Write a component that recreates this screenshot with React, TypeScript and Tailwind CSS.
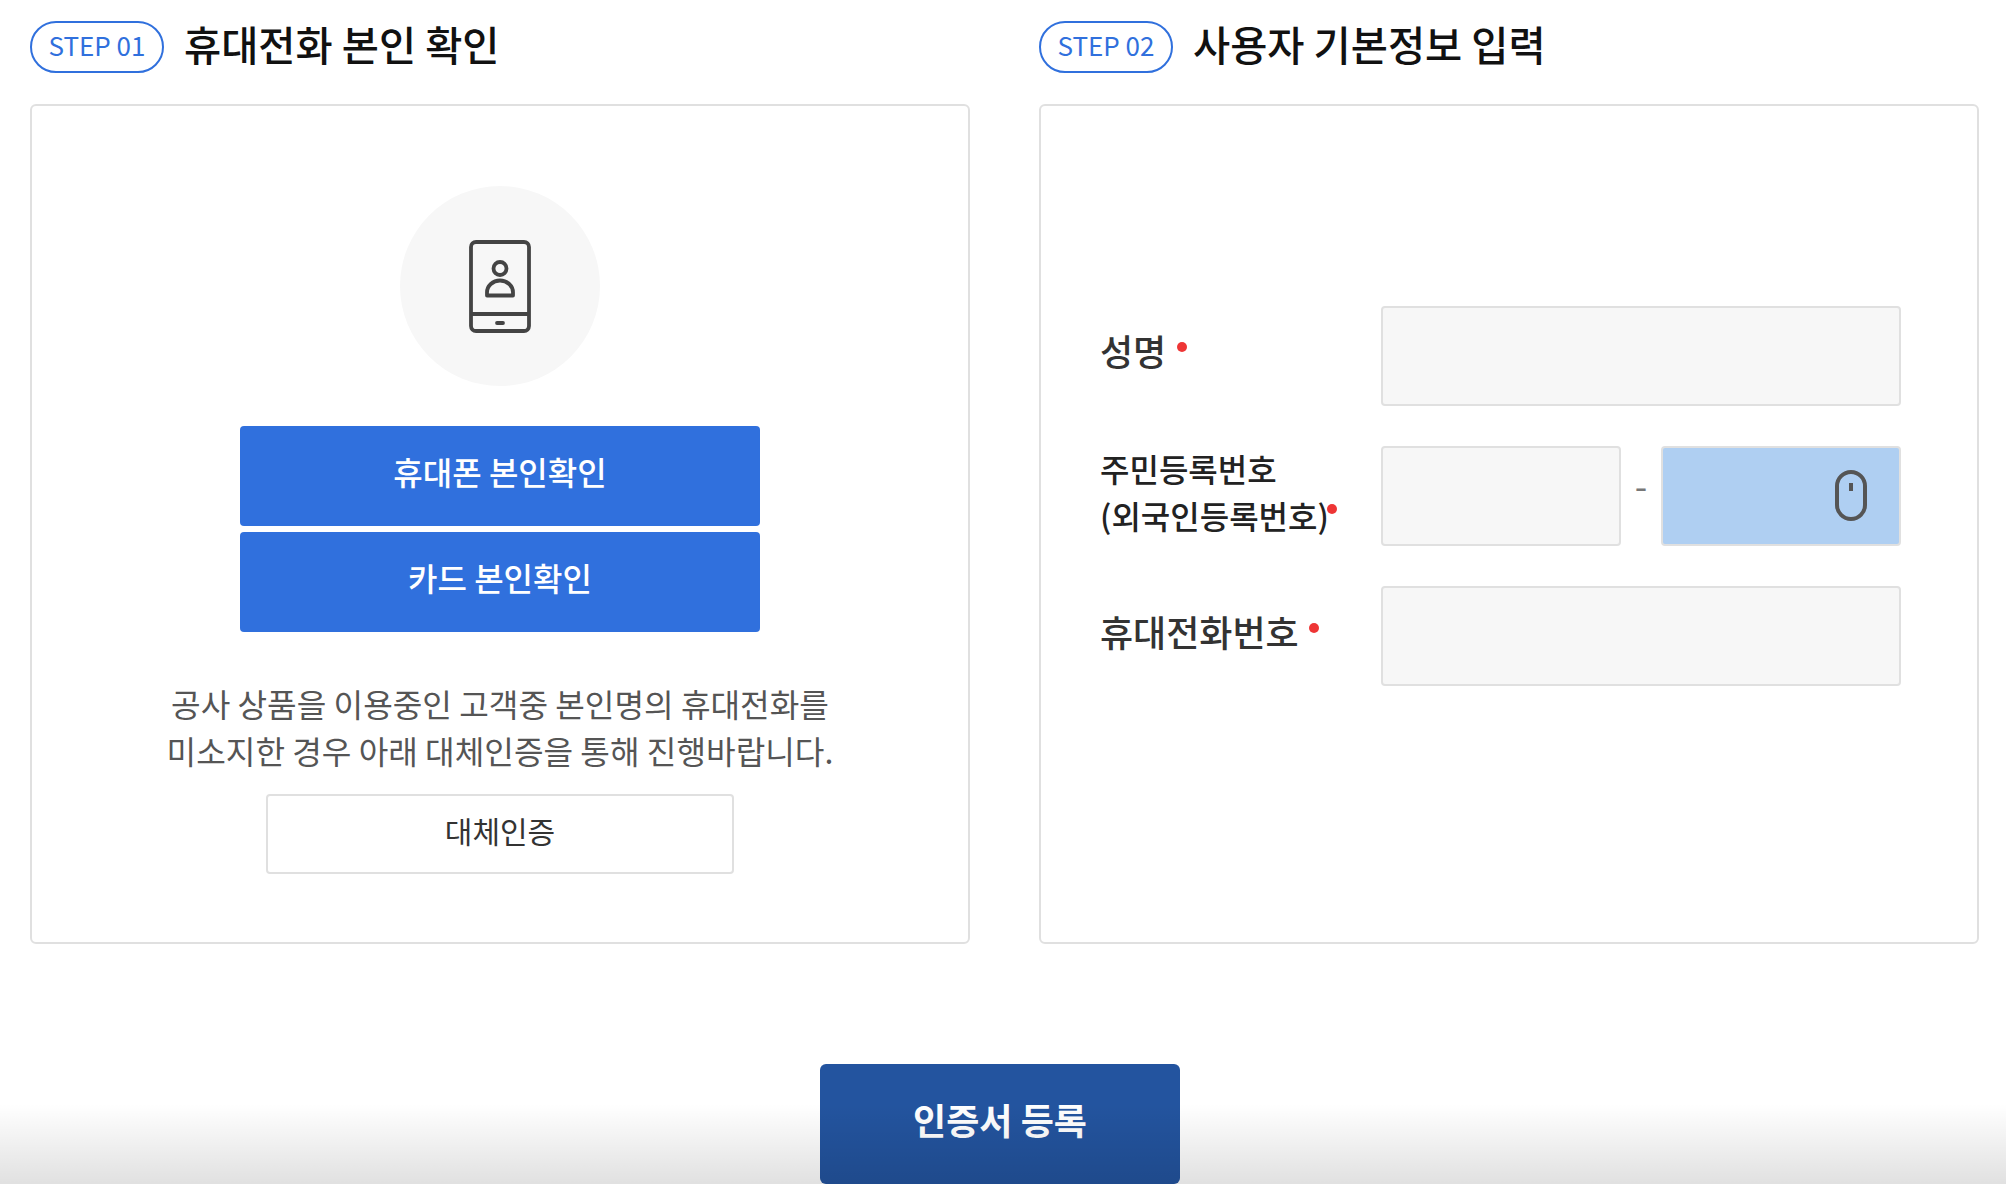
const font = "font-['Noto_Sans_CJK_KR','Noto_Sans',sans-serif]";

const StepTitle = ({ step, title }: { step: string; title: string }) => (
  <div className="flex items-center h-[52px] mb-[31px]">
    <span className="flex items-center justify-center w-[134px] h-[52px] pb-[5px] rounded-full border-2 border-[#3070dd] text-[#3070dd] text-[26px]">
      {step}
    </span>
    <h2 className="ml-[20px] pb-[5px] text-[40.4px] leading-none font-medium text-[#111]">{title}</h2>
  </div>
);

const Dot = ({ className }: { className: string }) => (
  <span className={`inline-block size-[10px] rounded-full bg-[#ee3535] ${className}`}></span>
);

const PhoneIcon = () => (
  <svg width="62" height="93" viewBox="0 0 62 93" fill="none" stroke="#444" strokeWidth="3.8">
    <rect x="2" y="2" width="58" height="89" rx="5" />
    <path d="M2 74h58" />
    <path d="M28 83h6" strokeLinecap="round" />
    <circle cx="31" cy="28.5" r="6.5" />
    <path d="M18 55.5v-3a13 12 0 0 1 26 0v3z" strokeLinejoin="round" />
  </svg>
);

const MouseCursor = () => (
  <svg width="32" height="51" viewBox="0 0 32 51" fill="none" stroke="#555" strokeWidth="4">
    <rect x="2" y="2" width="28" height="47" rx="14" />
    <path d="M16 13v8" />
  </svg>
);

const fieldClass = "h-[100px] rounded-[4px] border-2 border-[#e0e0e0] bg-[#f7f7f7]";

const App = () => {
  return (
    <div className={`relative h-[1184px] w-[2006px] overflow-hidden bg-white ${font}`}>
      <div className="flex gap-[69px] pl-[30px] pt-[21px]">
        <section className="w-[940px]">
          <StepTitle step="STEP 01" title="휴대전화 본인 확인" />
          <div className="flex flex-col items-center h-[840px] pt-[80px] rounded-[6px] border-2 border-[#e0e0e0]">
            <div className="flex items-center justify-center size-[200px] rounded-full bg-[#f7f7f7]">
              <PhoneIcon />
            </div>
            <button className="mt-[40px] h-[100px] w-[520px] pb-2.5 rounded-[4px] bg-[#3070dd] text-white text-[32px] font-medium">
              휴대폰 본인확인
            </button>
            <button className="mt-[6px] h-[100px] w-[520px] pb-2.5 rounded-[4px] bg-[#3070dd] text-white text-[32px] font-medium">
              카드 본인확인
            </button>
            <p className="mt-[48px] text-center text-[32.2px] leading-[47px] text-[#555]">
              공사 상품을 이용중인 고객중 본인명의 휴대전화를
              <br />
              미소지한 경우 아래 대체인증을 통해 진행바랍니다.
            </p>
            <button className="mt-[20px] h-[80px] w-[468px] pb-2 rounded-[4px] border-2 border-[#e0e0e0] bg-white text-[30px] text-[#333]">
              대체인증
            </button>
          </div>
        </section>
        <section className="w-[940px]">
          <StepTitle step="STEP 02" title="사용자 기본정보 입력" />
          <div className="flex flex-col gap-[40px] h-[840px] pt-[200px] pl-[59px] rounded-[6px] border-2 border-[#e0e0e0]">
            <div className="flex items-center h-[100px]">
              <div className="w-[281px] pb-3 text-[36px] font-medium text-[#333]">
                성명
                <Dot className="ml-[11px] mb-[14px]" />
              </div>
              <div className={`w-[520px] ${fieldClass}`}></div>
            </div>
            <div className="flex items-center h-[100px]">
              <div className="w-[281px] pb-2 text-[32px] leading-[47px] font-medium text-[#222]">
                주민등록번호
                <br />
                (외국인등록번호)
                <Dot className="ml-[-2px] mb-[15px]" />
              </div>
              <div className="flex items-center w-[520px]">
                <div className={`w-[240px] ${fieldClass}`}></div>
                <span className="flex-1 pb-[24px] text-center text-[36px] leading-none text-[#777]">-</span>
                <div className="flex items-center justify-end w-[240px] h-[100px] pr-[32px] pb-[2px] rounded-[4px] border-2 border-[#e0e0e0] bg-[#afcff2]">
                  <MouseCursor />
                </div>
              </div>
            </div>
            <div className="flex items-center h-[100px]">
              <div className="w-[281px] pb-2.5 text-[36px] font-medium text-[#333]">
                휴대전화번호
                <Dot className="ml-[10px] mb-[14px]" />
              </div>
              <div className={`w-[520px] ${fieldClass}`}></div>
            </div>
          </div>
        </section>
      </div>
      <div className="flex justify-center mt-[120px] pr-[6px]">
        <button className="w-[360px] h-[120px] pb-2.5 rounded-[6px] bg-[#23549f] text-white text-[36px] font-bold">
          인증서 등록
        </button>
      </div>
      <div className="pointer-events-none absolute inset-x-0 bottom-0 h-[80px] bg-gradient-to-b from-transparent to-black/12"></div>
    </div>
  );
};

export default App;
